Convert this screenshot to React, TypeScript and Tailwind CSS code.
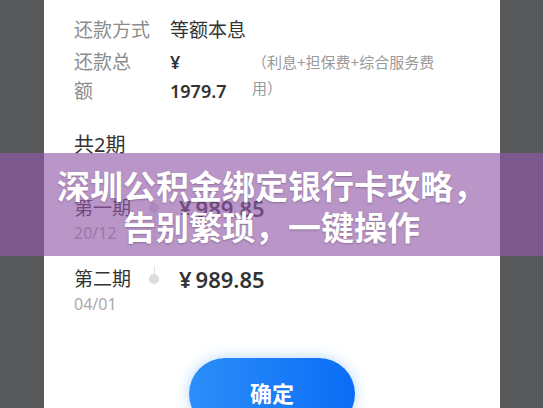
import React from "react";

const cjk = { fontFamily: '"Noto Sans", "Noto Sans CJK SC", sans-serif' };

function Period({
  name,
  date,
  amount,
  first,
}: {
  name: string;
  date: string;
  amount: string;
  first?: boolean;
}) {
  return (
    <div className={`flex ${first ? "pb-[21px]" : ""}`}>
      <div className="w-[75px]">
        <div className="text-[19px] leading-[26px] text-[#333]">{name}</div>
        <div className="text-[16px] leading-[24px] text-[#aaa]">{date}</div>
      </div>
      <div className="flex w-[10px] flex-col items-center">
        {first ? (
          <div className="h-[8px]" />
        ) : (
          <div className="h-[8px] w-px bg-[#e2e2e2]" />
        )}
        <div className="h-[10px] w-[10px] rounded-full bg-[#dcdcdc]" />
        {first && <div className="w-px flex-1 bg-[#e2e2e2]" />}
      </div>
      <div className="ml-[20px] text-[22px] font-semibold leading-[26px] text-[#333]">
        <span className="mr-[4px]">¥</span>
        {amount}
      </div>
    </div>
  );
}

export default function App() {
  return (
    <div
      className="relative h-[408px] w-[543px] overflow-hidden bg-[#58595a]"
      style={cjk}
    >
      <div className="ml-[44px] h-full w-[456px] bg-white pl-[30px] pt-[16px]">
        {/* repayment method */}
        <div className="flex h-[28px] items-center text-[19px] leading-[28px]">
          <span className="w-[96px] text-[#8c8c8c]">还款方式</span>
          <span className="text-[#333]">等额本息</span>
        </div>

        {/* repayment total */}
        <div className="mt-[4px] flex">
          <div className="w-[96px] text-[19px] leading-[29px] text-[#8c8c8c]">
            <div>还款总</div>
            <div>额</div>
          </div>
          <div className="w-[82px] text-[18px] font-semibold leading-[29px] text-[#333]">
            <div>¥</div>
            <div>1979.7</div>
          </div>
          <div className="mt-[1px] w-[200px] text-[15px] leading-[26px] text-[#999]">
            （利息+担保费+综合服务费用）
          </div>
        </div>

        <div className="mt-[25px] text-[20px] leading-[28px] text-[#333]">
          共2期
        </div>

        <div className="mt-[36px]">
          <Period name="第一期" date="20/12" amount="989.85" first />
          <Period name="第二期" date="04/01" amount="989.85" />
        </div>

        <div className="ml-[-30px] mt-[42px] flex justify-center">
          <button className="flex h-[72px] w-[166px] items-start justify-center rounded-full bg-gradient-to-r from-[#2b8ef9] to-[#0a6cf5] pt-[20px] text-[22px] font-bold leading-[30px] text-white shadow-[0_0_14px_rgba(40,140,250,0.35)]">
            确定
          </button>
        </div>
      </div>

      {/* title banner */}
      <div className="absolute left-0 right-0 top-[153px] flex h-[103px] flex-col items-center bg-[rgba(146,89,169,0.64)] pt-[13px] text-[33px] font-bold leading-[41px] text-white [text-shadow:0_1px_2px_rgba(0,0,0,0.25)]">
        <div>深圳公积金绑定银行卡攻略，</div>
        <div>告别繁琐，一键操作</div>
      </div>
    </div>
  );
}
